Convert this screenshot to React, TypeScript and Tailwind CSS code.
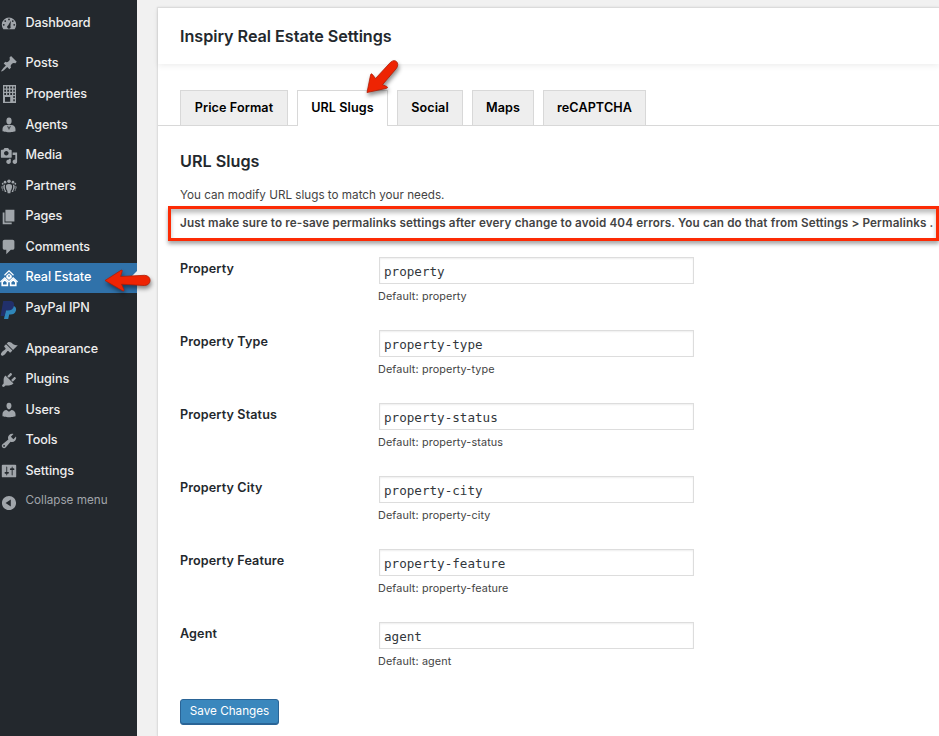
import type { ReactNode } from "react";

const ICON = {
  post: "M10.44 3.02l1.82-1.82 6.36 6.35-1.83 1.82c-1.05-.68-2.48-.57-3.41.36l-.75.75c-.92.93-1.04 2.35-.35 3.41l-1.83 1.82-2.41-2.41-2.8 2.79c-.42.42-3.38 2.71-3.8 2.29s1.86-3.39 2.28-3.81l2.79-2.79L4.1 9.36l1.83-1.82c1.05.69 2.48.57 3.4-.36l.75-.75c.93-.92 1.05-2.35.36-3.41z",
  comments: "M5 2h9c1.1 0 2 .9 2 2v7c0 1.1-.9 2-2 2h-2l-5 5v-5H5c-1.1 0-2-.9-2-2V4c0-1.1.9-2 2-2z",
  page: "M6 15V2h10v13H6zm-1 1h8v2H3V5h2v11z",
  media: "M13 11V4c0-.55-.45-1-1-1h-1.67L9 1H5L3.67 3H2c-.55 0-1 .45-1 1v7c0 .55.45 1 1 1h10c.55 0 1-.45 1-1zM7 4.5c1.38 0 2.5 1.12 2.5 2.5S8.38 9.5 7 9.5 4.5 8.38 4.5 7 5.62 4.500 7 4.500zM14 6h5v10.5c0 1.38-1.12 2.5-2.5 2.5S14 17.88 14 16.5s1.12-2.5 2.5-2.5c.17 0 .34.02.5.05V9h-3V6zm-4 8.05V13h2v3.5c0 1.38-1.12 2.5-2.5 2.5S7 17.88 7 16.5 8.12 14 9.5 14c.17 0 .34.02.5.05z",
  users: "M10 9.25c-2.27 0-2.73-3.44-2.73-3.44C7 4.02 7.82 2 9.97 2c2.16 0 2.98 2.02 2.71 3.81 0 0-.41 3.44-2.68 3.44zm0 2.57L12.72 10c2.39 0 4.52 2.33 4.52 4.53v2.49s-3.65 1.13-7.24 1.13c-3.65 0-7.24-1.13-7.24-1.13v-2.49c0-2.25 1.94-4.48 4.47-4.48z",
  tools: "M16.68 9.77c-1.34 1.34-3.3 1.67-4.95.99l-5.41 6.52c-.99.99-2.59.99-3.58 0s-.99-2.59 0-3.57l6.52-5.42c-.68-1.65-.35-3.61.99-4.95 1.28-1.28 3.12-1.62 4.72-1.06l-2.89 2.89 2.82 2.82 2.86-2.87c.53 1.58.18 3.39-1.08 4.65zM3.81 16.21c.4.39 1.04.39 1.43 0 .4-.4.4-1.04 0-1.43-.39-.4-1.03-.4-1.43 0-.39.39-.39 1.03 0 1.43z",
  settings: "M18 16V4c0-.55-.45-1-1-1H3c-.55 0-1 .45-1 1v12c0 .55.45 1 1 1h14c.55 0 1-.45 1-1zM8 11h1c.55 0 1 .45 1 1s-.45 1-1 1H8v1.5c0 .28-.22.5-.5.5s-.5-.22-.5-.5V13H6c-.55 0-1-.45-1-1s.45-1 1-1h1V5.5c0-.28.22-.5.5-.5s.5.22.5.5V11zm5-2h-1c-.55 0-1-.45-1-1s.45-1 1-1h1V5.5c0-.28.22-.5.5-.5s.5.22.5.5V7h1c.55 0 1 .45 1 1s-.45 1-1 1h-1v5.5c0 .28-.22.5-.5.5s-.5-.22-.5-.5V9z",
  plugins: "M13.11 4.36L9.87 7.6 8 5.73l3.24-3.24c.35-.34 1.05-.2 1.56.32.52.51.66 1.21.31 1.55zm-8 1.77l.91-1.12 9.01 9.01-1.19.84c-.71.71-2.63 1.16-3.82 1.16H6.14L4.9 17.26c-.59.59-1.54.59-2.12 0-.59-.58-.59-1.53 0-2.12l1.24-1.24v-3.88c0-1.13.4-3.19 1.09-3.89zm7.26 3.97l3.24-3.24c.34-.35 1.04-.21 1.55.31.52.51.66 1.21.31 1.55l-3.24 3.25z",
  appearance: "M14.48 11.06L7.41 3.99l1.5-1.5c.5-.56 2.3-.47 3.51.32 1.21.8 1.43 1.28 2.91 2.1 1.18.64 2.45 1.26 4.45.85zm-.71.71L6.7 4.7 4.93 6.47c-.39.39-.39 1.02 0 1.41l1.06 1.06c.39.39.39 1.03 0 1.42-.6.6-1.43 1.11-2.21 1.69-.35.26-.7.53-1.01.84C1.43 14.23.4 16.08 1.4 17.07c.99 1 2.84-.03 4.18-1.36.31-.31.58-.66.85-1.02.57-.78 1.08-1.61 1.69-2.21.39-.39 1.02-.39 1.41 0l1.06 1.06c.39.39 1.02.39 1.41 0z",
  collapse: "M10 2.16c4.33 0 7.84 3.51 7.84 7.84s-3.51 7.84-7.84 7.84S2.16 14.33 2.16 10 5.71 2.16 10 2.16zm2 11.72V6.12L6.18 9.97z",
};

function Glyph({ d, children }: { d?: string; children?: ReactNode }) {
  return (
    <svg viewBox="0 0 20 20" className="size-[18px] shrink-0" fill="currentColor" fillRule="evenodd">
      {d ? <path d={d} /> : children}
    </svg>
  );
}

const dashboardIcon = (
  <Glyph>
    <path d="M3.76 17h12.48A8 8 0 1 0 3.76 17zM10 5a1 1 0 1 1 0 2 1 1 0 0 1 0-2zM5.800 6.900a1 1 0 1 1 0 2 1 1 0 0 1 0-2zM14.200 6.900a1 1 0 1 1 0 2 1 1 0 0 1 0-2zM4.200 11a1 1 0 1 1 0 2 1 1 0 0 1 0-2zM15.800 11a1 1 0 1 1 0 2 1 1 0 0 1 0-2zM12.100 7.400l-.5 6.200a1.900 1.900 0 1 1-2.600-.8z" />
  </Glyph>
);

const buildingIcon = (
  <svg viewBox="0 0 18 20" className="h-5 w-[18px] shrink-0" fill="currentColor" fillRule="evenodd">
    <path d="M3 1h13v18H3zM4.300 2.500v2h1.700v-2zm3 0v2H9v-2zm3 0v2H12v-2zm3 0v2h1.500v-2zM4.300 5.700v2h1.700v-2zm3 0v2H9v-2zm3 0v2H12v-2zm3 0v2h1.500v-2zM4.300 8.900v2h1.700v-2zm3 0v2H9v-2zm3 0v2H12v-2zm3 0v2h1.500v-2zM5 13v4.800h5.200V13zm8.300-.9v2h1.500v-2zm0 3.200v2h1.500v-2z" />
  </svg>
);

const agentIcon = (
  <Glyph>
    <ellipse cx="10" cy="5.600" rx="2.900" ry="3.800" />
    <path d="M7.300 10h5.400c2.600 0 4.500 2.300 4.500 4.500V17s-3.600 1.100-7.200 1.100S2.800 17 2.800 17v-2.500C2.800 12.300 4.700 10 7.300 10zM8.100 10.800l1.300 4.700.3-3.100-.7-1.100zM11.900 10.800l-1.300 4.700-.3-3.100.7-1.100z" />
  </Glyph>
);

const groupIcon = (
  <Glyph>
    <circle cx="10" cy="4.800" r="2" />
    <circle cx="5.600" cy="5.800" r="1.500" />
    <circle cx="14.400" cy="5.800" r="1.500" />
    <path d="M6.600 10.300C6.600 8.500 8 7.700 10 7.700s3.400.8 3.400 2.600c0 2.600-.8 4.200-1.500 5L11.500 18h-3l-.4-2.700c-.7-.8-1.500-2.400-1.500-5z" />
    <path d="M5.700 8.300c-.8 2.800-.4 5.300 1.100 7.300l.2 1.200H5.300l-.4-2.300c-.7-.8-1.300-2-1.300-3.900 0-1.300.7-2.100 2.100-2.300zM14.300 8.300c.8 2.800.4 5.300-1.100 7.300l-.2 1.200h1.700l.4-2.300c.7-.8 1.300-2 1.300-3.900 0-1.300-.7-2.100-2.100-2.300z" />
    <path d="M2.900 9.600c-.4 2.200-.1 4.200 1 6H3l-.4-1.700c-.6-.5-1-1.400-1-2.500 0-1 .4-1.600 1.300-1.800zM17.100 9.600c.4 2.200.1 4.200-1 6h.9l.4-1.700c.6-.5 1-1.400 1-2.500 0-1-.4-1.600-1.300-1.800z" />
    <circle cx="3" cy="7.500" r="1" />
    <circle cx="17" cy="7.500" r="1" />
  </Glyph>
);

const housesIcon = (
  <svg viewBox="0 0 18 18" className="size-[18px] shrink-0" fill="none" stroke="currentColor">
    <path d="M4.500 6.200L9 1.900l4.500 4.300M.4 13L4.800 8.800 9 12.800l4.200-4L17.600 13" strokeWidth="1.200" />
    <path d="M6.200 6.800L9 4.200l2.800 2.600v1.700L9 11 6.200 8.500z" fill="currentColor" stroke="none" />
    <path d="M8.500 6.300h1v1.300h-1z" stroke="#3072aa" strokeWidth="0.600" />
    <path d="M2.200 13.100l2.600-2.400 2.600 2.400v3.300H2.200zM10.600 13.100l2.600-2.400 2.600 2.400v3.300h-5.200z" strokeWidth="1.600" />
  </svg>
);

const paypalIcon = (
  <svg viewBox="0 0 18 20" className="mt-[3px] h-5 w-[18px] shrink-0">
    <path d="M6.500 6h6.500c2.500 0 3.600 2.400 2.900 4.800-.8 2.700-2.800 3.800-5.400 3.800H9.200L8.200 19H4z" fill="#2f86b9" />
    <path d="M3.200 1h6.600c3.300 0 4.800 1.800 4.200 4.700-.7 3.400-3 4.900-6.200 4.900H5.900L4.800 16H.6z" fill="#21306b" />
  </svg>
);

type Item = { label: string; icon: ReactNode; active?: boolean; gap?: boolean };

const MENU: Item[] = [
  { label: "Dashboard", icon: dashboardIcon },
  { label: "Posts", icon: <Glyph d={ICON.post} />, gap: true },
  { label: "Properties", icon: buildingIcon },
  { label: "Agents", icon: agentIcon },
  { label: "Media", icon: <Glyph d={ICON.media} /> },
  { label: "Partners", icon: groupIcon },
  { label: "Pages", icon: <Glyph d={ICON.page} /> },
  { label: "Comments", icon: <Glyph d={ICON.comments} /> },
  { label: "Real Estate", icon: housesIcon, active: true },
  { label: "PayPal IPN", icon: paypalIcon },
  { label: "Appearance", icon: <Glyph d={ICON.appearance} />, gap: true },
  { label: "Plugins", icon: <Glyph d={ICON.plugins} /> },
  { label: "Users", icon: <Glyph d={ICON.users} /> },
  { label: "Tools", icon: <Glyph d={ICON.tools} /> },
  { label: "Settings", icon: <Glyph d={ICON.settings} /> },
];

const TABS = [
  { label: "Price Format", width: "w-[108px]" },
  { label: "URL Slugs", width: "w-[91px]", active: true },
  { label: "Social", width: "w-[66px]" },
  { label: "Maps", width: "w-[62px]" },
  { label: "reCAPTCHA", width: "w-[103px]" },
];

const FIELDS = [
  ["Property", "property"],
  ["Property Type", "property-type"],
  ["Property Status", "property-status"],
  ["Property City", "property-city"],
  ["Property Feature", "property-feature"],
  ["Agent", "agent"],
];

function Sidebar() {
  return (
    <nav className="relative h-full w-[137px] shrink-0 bg-[#23282d] pt-[8px] text-[12.6px] font-medium text-[#eee]">
      {MENU.map((m) => (
        <div
          key={m.label}
          className={`relative flex h-[30.6px] items-center gap-[7.500px] ${m.gap ? "mt-[9.900px]" : ""} ${m.active ? "bg-[#3072aa] text-white" : ""}`}
        >
          <span className={`flex h-[18px] w-[18px] items-center ${m.active ? "text-white" : "text-[#a0a5aa]"}`}>{m.icon}</span>
          <span className="tracking-[-0.080px]">{m.label}</span>
          {m.active && (
            <span className="absolute right-0 top-[8px] h-0 w-0 border-y-[7px] border-r-[7px] border-y-transparent border-r-[#f1f1f1]" />
          )}
        </div>
      ))}
      <div className="flex h-[30px] items-center gap-[7.500px] font-normal text-[#a0a5aa]">
        <span className="mt-[2px] flex">
          <Glyph d={ICON.collapse} />
        </span>
        <span className="mt-[-2px] text-[11.700px]">Collapse menu</span>
      </div>
    </nav>
  );
}

function ArrowLeft() {
  return (
    <svg viewBox="0 0 52 28" className="absolute left-[101px] top-[266px] h-7 w-[52px] drop-shadow-[1px_3px_2px_rgba(0,0,0,0.45)]">
      <path d="M4 14.500L20 4.300c1-.5 1.500 0 1.200 1L19.600 10.500 43.500 9.300c7.500.2 7.500 10 0 10.200L20.500 18.200l2.500 5.500c.3 1-.4 1.500-1.300 1.100z" fill="#ee2403" stroke="#b01c04" strokeWidth="0.8" />
    </svg>
  );
}

function ArrowDown() {
  return (
    <svg viewBox="0 0 40 42" className="absolute left-[362px] top-[56px] h-[42px] w-10 drop-shadow-[1px_3px_2px_rgba(0,0,0,0.45)]">
      <path d="M5 36.500L8.600 18.800c.3-1.200 1.200-1.200 1.900-.3l3 4L28.500 6.300c5-4.500 9.500 1 6 6L20.500 28.700l4.300 1.800c1 .6.900 1.400-.2 1.800z" fill="#ee2403" stroke="#b01c04" strokeWidth="0.8" />
    </svg>
  );
}

export default function App() {
  return (
    <div className="relative flex h-[736px] w-[939px] overflow-hidden bg-[#f1f1f1] font-['Inter',sans-serif]">
      <Sidebar />
      <main className="ml-5 mt-[7px] h-[729px] min-w-0 flex-1 border-l border-t border-[#dedede] bg-white shadow-[0_0_2px_rgba(0,0,0,0.08)]">
        <header className="flex h-[56px] items-center pl-[22px] shadow-[0_2px_6px_rgba(0,0,0,0.07)]">
          <h1 className="text-[16.200px] font-semibold tracking-[-0.040px] text-[#23282d]">Inspiry Real Estate Settings</h1>
        </header>
        <div className="mt-[26px] flex h-9 items-end gap-[9px] border-b border-[#d8d8d8] pl-[22px]">
          {TABS.map((t) => (
            <div
              key={t.label}
              className={`flex shrink-0 items-center justify-center border-x border-t border-[#d8d8d8] text-[12.600px] font-semibold tracking-[0.100px] whitespace-nowrap text-black ${t.width} ${t.active ? "-mb-px h-9 bg-white pb-px" : "h-[35px] bg-[#eee]"}`}
            >
              {t.label}
            </div>
          ))}
        </div>
        <section className="pl-[22px] pt-[23px]">
          <h2 className="text-[16.200px] leading-6 font-semibold text-[#23282d]">URL Slugs</h2>
          <p className="mt-[13px] text-[11.700px] leading-[18px] text-[#444]">You can modify URL slugs to match your needs.</p>
          <div className="-ml-[12px] mt-[2px] flex h-[35px] items-center border-[3px] border-[#fc2b05] pl-[9px] shadow-[0_3px_4px_rgba(0,0,0,0.35),inset_0_4px_4px_rgba(0,0,0,0.25)]">
            <p className="text-[11.700px] font-semibold tracking-[0.136px] whitespace-nowrap text-[#444]">
              Just make sure to re-save permalinks settings after every change to avoid 404 errors. You can do that from Settings &gt; Permalinks .
            </p>
          </div>
          <form className="mt-[16px]">
            {FIELDS.map(([label, value]) => (
              <div key={label} className="flex h-[73px]">
                <label className="w-[198px] pt-[3px] text-[12.600px] leading-[18px] font-semibold tracking-[0.110px] text-[#23282d]">{label}</label>
                <div>
                  <input
                    readOnly
                    value={value}
                    className="ml-px block h-[27px] w-[315px] border border-[#ddd] bg-white px-[4px] pt-[2px] font-['DejaVu_Sans_Mono',monospace] text-[12.600px] text-[#32373c] shadow-[inset_0_1px_2px_rgba(0,0,0,0.07)] outline-none"
                  />
                  <p className="mt-[5px] text-[10.800px] leading-4 tracking-[0.120px] text-[#444]">Default: {value}</p>
                </div>
              </div>
            ))}
            <button
              type="button"
              className="mt-[4px] flex h-[26px] w-[99px] items-center justify-center rounded-[3px] border border-[#2a6496] bg-[#3a87bd] text-[11.700px] whitespace-nowrap text-white shadow-[inset_0_-1px_0_#2a6496]"
            >
              Save Changes
            </button>
          </form>
        </section>
      </main>
      <ArrowLeft />
      <ArrowDown />
    </div>
  );
}
